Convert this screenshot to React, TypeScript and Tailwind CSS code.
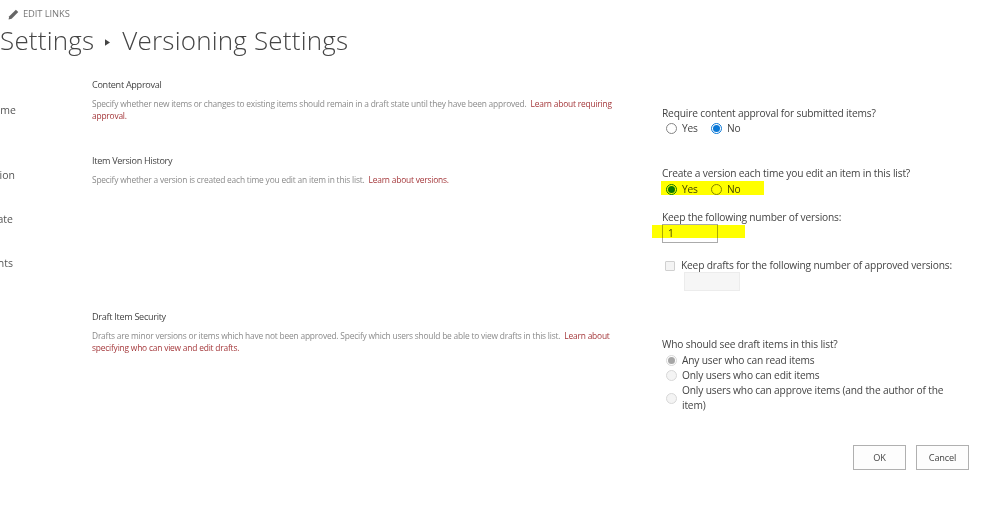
import { ReactNode } from 'react'

const FONT = "font-['Open_Sans',sans-serif]"

function Radio({ state = 'off' }: { state?: 'off' | 'on' | 'disabled' | 'disabled-on' }) {
  if (state === 'on') {
    return (
      <span className="flex h-[11px] w-[11px] shrink-0 items-center justify-center rounded-full border border-[#0a78d7]">
        <span className="h-[7px] w-[7px] rounded-full bg-[#0a78d7]" />
      </span>
    )
  }
  if (state === 'disabled-on') {
    return (
      <span className="flex h-[11px] w-[11px] shrink-0 items-center justify-center rounded-full border border-[#d8d8d8]">
        <span className="h-[7px] w-[7px] rounded-full bg-[#a6a6a6]" />
      </span>
    )
  }
  if (state === 'disabled') {
    return <span className="h-[11px] w-[11px] shrink-0 rounded-full border border-[#d8d8d8] bg-[#f4f4f4]" />
  }
  return <span className="h-[11px] w-[11px] shrink-0 rounded-full border border-[#858585] bg-white" />
}

function Section({ title, children, className }: { title: string; children: ReactNode; className: string }) {
  return (
    <section className={className}>
      <h3 className="text-[9.1px] leading-[14px] tracking-[-0.3px] text-[#444]">{title}</h3>
      <p className="mt-[6px] text-[8.4px] leading-[12px] tracking-[-0.19px] text-[#8a8a8a]">{children}</p>
    </section>
  )
}

function Learn({ children }: { children: ReactNode }) {
  return <a className="text-[#a4373a]">{children}</a>
}

function NavItem({ label, className }: { label: string; className: string }) {
  return (
    <div className={`flex justify-end overflow-hidden text-[10.5px] leading-[14px] whitespace-nowrap text-[#555] ${className}`}>
      {label}
    </div>
  )
}

export default function App() {
  return (
    <div className={`relative h-[519px] w-[999px] overflow-hidden bg-white ${FONT}`}>
      <div className="flex h-[29px] items-center pl-[8px]">
        <svg viewBox="0 0 12 12" className="h-[11px] w-[11px] text-[#666]" fill="currentColor">
          <path d="M8.6.8 11.2 3.4 4 10.6.6 11.4 1.4 8Z" />
        </svg>
        <span className="ml-[4px] text-[9.4px] tracking-[-0.1px] text-[#777]">EDIT LINKS</span>
      </div>

      <div className="flex h-[23px] items-center text-[26px] leading-[23px] font-light tracking-[0.2px] whitespace-nowrap text-[#444]">
        <span>Settings</span>
        <svg viewBox="0 0 6 8" className="mt-[4px] mr-[12px] ml-[11px] h-[7px] w-[5px] text-[#444]" fill="currentColor">
          <path d="M0 0 6 4 0 8Z" />
        </svg>
        <span>Versioning Settings</span>
      </div>

      <div className="mt-[26px] flex">
        <div className="w-[16px] shrink-0 pt-[25px]">
          <NavItem label="Home" className="w-[16px]" />
          <NavItem label="Navigation" className="mt-[51px] w-[15px]" />
          <NavItem label="Create" className="mt-[30px] w-[13px]" />
          <NavItem label="Documents" className="mt-[30px] w-[13px]" />
        </div>

        <div className="ml-[76px] w-[530px] shrink-0">
          <Section title="Content Approval" className="">
            Specify whether new items or changes to existing items should remain in a draft state until they have been approved.
            {'  '}&nbsp;<Learn>Learn about requiring approval.</Learn>
          </Section>
          <Section title="Item Version History" className="mt-[32px]">
            Specify whether a version is created each time you edit an item in this list. &nbsp;<Learn>Learn about versions.</Learn>
          </Section>
          <Section title="Draft Item Security" className="mt-[124px]">
            Drafts are minor versions or items which have not been approved. Specify which users should be able to view drafts in this list. &nbsp;
            <Learn>Learn about specifying who can view and edit drafts.</Learn>
          </Section>
        </div>

        <div className="ml-[40px] w-[290px] shrink-0 pt-[28px] text-[10.2px] leading-[15px] tracking-[-0.17px] text-[#444]">
          <div>Require content approval for submitted items?</div>
          <div className="flex h-[15px] items-center pl-[4px]">
            <Radio />
            <span className="ml-[5px] w-[29px]">Yes</span>
            <Radio state="on" />
            <span className="ml-[5px]">No</span>
          </div>

          <div className="mt-[30px]">Create a version each time you edit an item in this list?</div>
          <div className="flex h-[16px] items-center pl-[4px]">
            <Radio state="on" />
            <span className="ml-[5px] w-[29px]">Yes</span>
            <Radio />
            <span className="ml-[5px]">No</span>
          </div>

          <div className="mt-[13px]">Keep the following number of versions:</div>
          <div className="-mt-[1px] flex h-[19px] w-[56px] items-center border border-[#ababab] bg-white pl-[5px]">1</div>

          <div className="mt-[15px] flex items-center pl-[3px]">
            <span className="h-[10px] w-[10px] shrink-0 rounded-[1px] border border-[#d0d0d0] bg-[#f4f4f4]" />
            <span className="ml-[6px] whitespace-nowrap">Keep drafts for the following number of approved versions:</span>
          </div>
          <div className="-mt-[1px] ml-[22px] h-[19px] w-[56px] border border-[#ececec] bg-[#f6f6f6]" />

          <div className="mt-[46px]">Who should see draft items in this list?</div>
          <div className="flex h-[16px] items-center pl-[4px]">
            <Radio state="disabled-on" />
            <span className="ml-[5px]">Any user who can read items</span>
          </div>
          <div className="flex h-[15px] items-center pl-[4px]">
            <Radio state="disabled" />
            <span className="ml-[5px]">Only users who can edit items</span>
          </div>
          <div className="flex items-center pl-[4px]">
            <Radio state="disabled" />
            <span className="ml-[5px] w-[268px]">Only users who can approve items (and the author of the item)</span>
          </div>

          <div className="mt-[32px] flex w-[307px] justify-end gap-[10px]">
            <button className="h-[25px] w-[53px] border border-[#b0b0b0] bg-[#fdfdfd] text-[9.2px] text-[#444]">OK</button>
            <button className="h-[25px] w-[53px] border border-[#b0b0b0] bg-[#fdfdfd] text-[9.2px] text-[#444]">Cancel</button>
          </div>
        </div>
      </div>

      <div className="absolute top-[181px] left-[661px] h-[14px] w-[103px] bg-[#ffff00] mix-blend-multiply" />
      <div className="absolute top-[225px] left-[652px] h-[13px] w-[93px] bg-[#ffff00] mix-blend-multiply" />
    </div>
  )
}
